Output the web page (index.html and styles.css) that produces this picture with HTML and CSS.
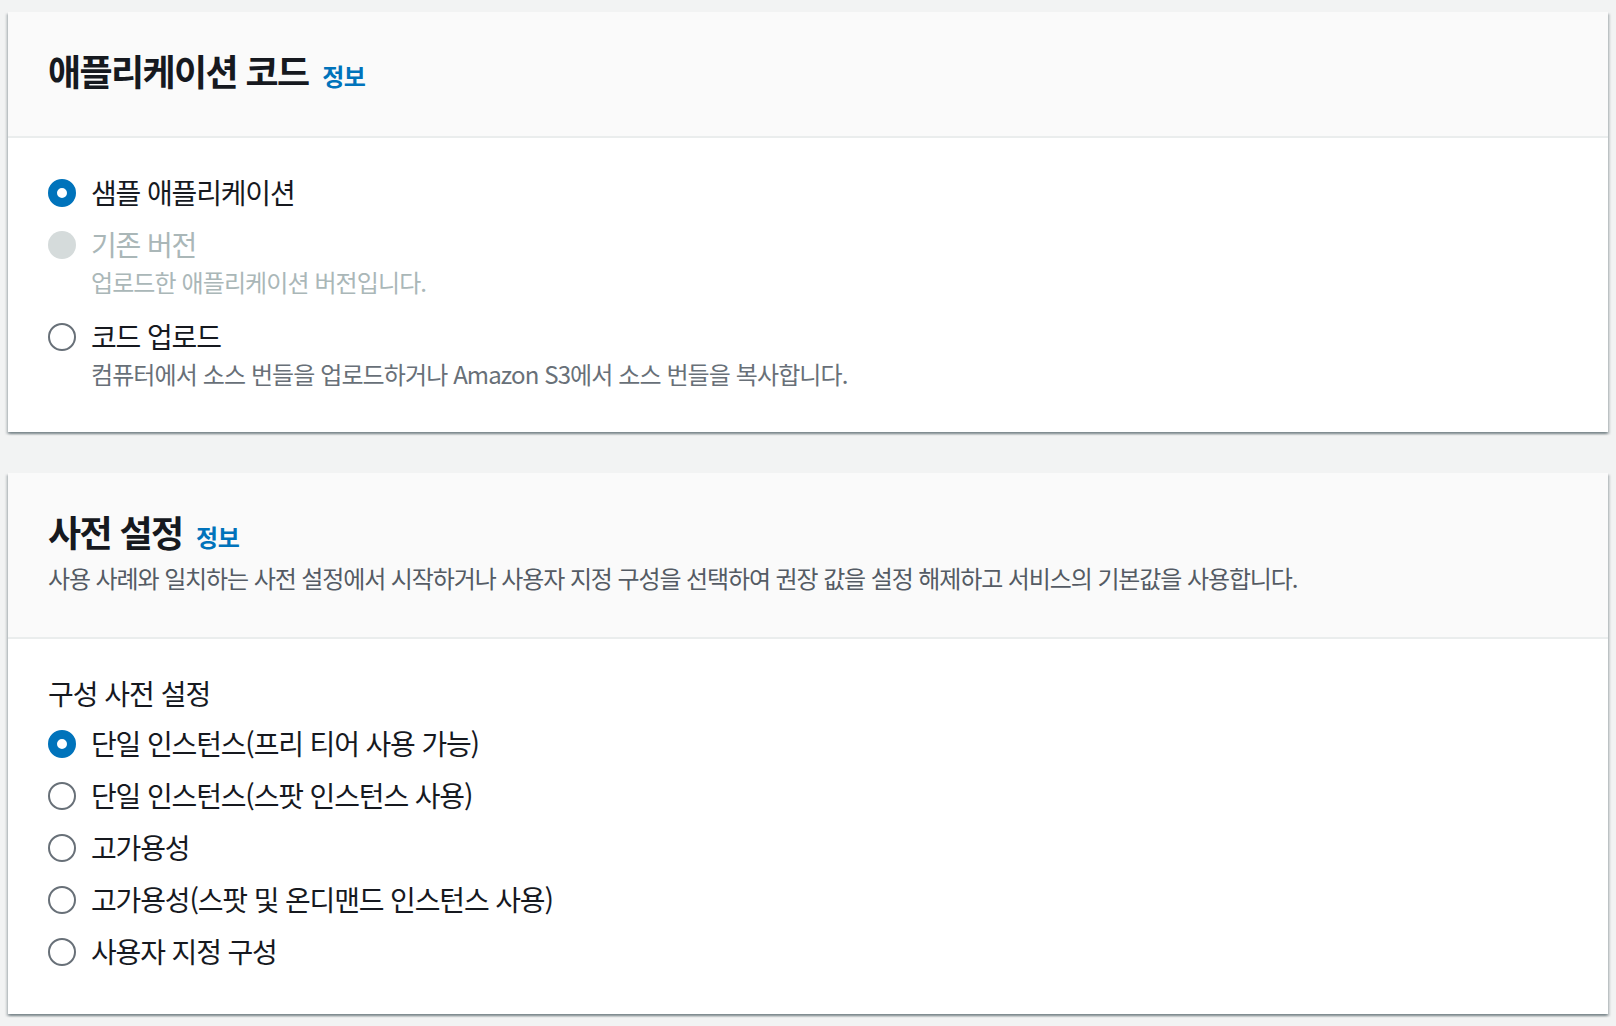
FILE: index.html
```html
<!DOCTYPE html>
<html lang="ko">
<head>
<meta charset="utf-8">
<title>애플리케이션 코드</title>
<link rel="stylesheet" href="styles.css">
</head>
<body>
<main class="page">
  <section class="card">
    <header class="card-header">
      <h2 class="card-title">애플리케이션 코드 <a class="info-link" href="#">정보</a></h2>
    </header>
    <div class="card-body">
      <div class="radio-group">
        <label class="option">
          <span class="radio checked"></span>
          <span class="option-text">
            <span class="option-label">샘플 애플리케이션</span>
          </span>
        </label>
        <label class="option has-desc disabled">
          <span class="radio"></span>
          <span class="option-text">
            <span class="option-label">기존 버전</span>
            <span class="option-desc">업로드한 애플리케이션 버전입니다.</span>
          </span>
        </label>
        <label class="option has-desc">
          <span class="radio"></span>
          <span class="option-text">
            <span class="option-label">코드 업로드</span>
            <span class="option-desc">컴퓨터에서 소스 번들을 업로드하거나 Amazon S3에서 소스 번들을 복사합니다.</span>
          </span>
        </label>
      </div>
    </div>
  </section>

  <section class="card">
    <header class="card-header with-desc">
      <h2 class="card-title">사전 설정 <a class="info-link" href="#">정보</a></h2>
      <p class="card-desc">사용 사례와 일치하는 사전 설정에서 시작하거나 사용자 지정 구성을 선택하여 권장 값을 설정 해제하고 서비스의 기본값을 사용합니다.</p>
    </header>
    <div class="card-body">
      <div class="field-label">구성 사전 설정</div>
      <div class="radio-group">
        <label class="option"><span class="radio checked"></span><span class="option-text"><span class="option-label">단일 인스턴스(프리 티어 사용 가능)</span></span></label>
        <label class="option"><span class="radio"></span><span class="option-text"><span class="option-label">단일 인스턴스(스팟 인스턴스 사용)</span></span></label>
        <label class="option"><span class="radio"></span><span class="option-text"><span class="option-label">고가용성</span></span></label>
        <label class="option"><span class="radio"></span><span class="option-text"><span class="option-label">고가용성(스팟 및 온디맨드 인스턴스 사용)</span></span></label>
        <label class="option"><span class="radio"></span><span class="option-text"><span class="option-label">사용자 지정 구성</span></span></label>
      </div>
    </div>
  </section>
</main>
</body>
</html>
```
FILE: styles.css
```css
html, body {
  margin: 0;
  padding: 0;
  background: #f2f3f3;
}
body {
  font-family: "Noto Sans CJK KR", "Noto Sans", sans-serif;
  color: #16191f;
  font-feature-settings: "palt";
}
.page {
  display: flex;
  flex-direction: column;
  gap: 41px;
  padding: 12px 8px 12px 8px;
}
.card {
  background: #fff;
  box-shadow: 0 2px 2px 0 rgba(0, 28, 36, 0.3), 2px 2px 2px 0 rgba(0, 28, 36, 0.15), -2px 2px 2px 0 rgba(0, 28, 36, 0.15);
}
.card-header {
  background: #fafafa;
  border-bottom: 2px solid #eaeded;
  padding: 36px 40px 44px 40px;
}
.card-header.with-desc {
  padding-bottom: 41px;
}
.card-title {
  margin: 0;
  font-size: 36px;
  line-height: 44px;
  font-weight: 700;
  letter-spacing: -1.6px;
  color: #16191f;
}
.info-link {
  font-size: 24px;
  line-height: 1;
  font-weight: 700;
  letter-spacing: -0.5px;
  color: #0073bb;
  text-decoration: none;
  margin-left: 5px;
}
.card-desc {
  margin: 7px 0 0 0;
  font-size: 24px;
  line-height: 36px;
  letter-spacing: -1.1px;
  color: #545b64;
}
.card-body {
  padding: 32px 40px 41px 40px;
}
.card:first-child .card-body {
  padding-bottom: 42px;
}
.field-label {
  font-size: 28px;
  line-height: 44px;
  letter-spacing: -1px;
  color: #16191f;
  margin-bottom: 6px;
}
.radio-group {
  display: flex;
  flex-direction: column;
  gap: 8px;
}
.option {
  display: flex;
  align-items: flex-start;
  gap: 15px;
  cursor: pointer;
}
.option.has-desc:not(:last-child) {
  padding-bottom: 8px;
}
.radio {
  flex: none;
  box-sizing: border-box;
  width: 28px;
  height: 28px;
  margin-top: 9px;
  border-radius: 50%;
  border: 2px solid #687078;
  background: #fff;
}
.radio.checked {
  border: 9px solid #0073bb;
}
.option.disabled .radio {
  border: none;
  background: #d5dbdb;
}
.option-text {
  display: flex;
  flex-direction: column;
}
.option-label {
  font-size: 28px;
  line-height: 44px;
  letter-spacing: -1.15px;
  color: #16191f;
}
.option-desc {
  font-size: 24px;
  line-height: 32px;
  letter-spacing: -0.9px;
  color: #687078;
}
.option.disabled .option-label,
.option.disabled .option-desc {
  color: #aab7b8;
}
```
